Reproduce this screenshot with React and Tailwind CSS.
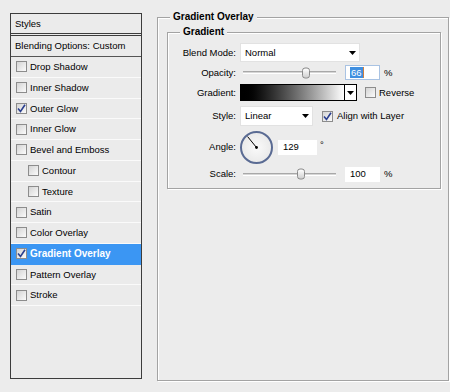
import React from "react";

function Check({ checked }) {
  return (
    <div className="w-[11px] h-[11px] shrink-0 border border-[#8c8c8c] bg-gradient-to-br from-[#d4d4d4] to-[#fbfbfb] flex items-center justify-center">
      {checked && (
        <svg width="9" height="9" viewBox="0 0 9 9">
          <path d="M1 4.5 L3.5 7.5 L8 0.8" stroke="#2a3f8f" strokeWidth="1.6" fill="none" />
        </svg>
      )}
    </div>
  );
}

function Arrow() {
  return (
    <svg width="7" height="4" viewBox="0 0 7 4">
      <path d="M0 0h7L3.5 4z" fill="#000" />
    </svg>
  );
}

function Slider({ pos }) {
  return (
    <div className="relative w-[96px] h-full flex items-center">
      <div className="ml-[3px] w-[93px] h-[3px] border-t border-[#a8a8a8] border-b border-b-white bg-[#d6d6d6]" />
      <div
        className="absolute top-1/2 -translate-y-1/2 w-[8px] h-[11px] rounded-[3px] border border-[#8a8a8a] bg-gradient-to-b from-white to-[#d0d0d0]"
        style={{ left: pos }}
      />
    </div>
  );
}

const items = [
  ["Drop Shadow", false, 0],
  ["Inner Shadow", false, 0],
  ["Outer Glow", true, 0],
  ["Inner Glow", false, 0],
  ["Bevel and Emboss", false, 0],
  ["Contour", false, 1],
  ["Texture", false, 1],
  ["Satin", false, 0],
  ["Color Overlay", false, 0],
  ["Gradient Overlay", true, 0, true],
  ["Pattern Overlay", false, 0],
  ["Stroke", false, 0],
];

export default function App() {
  return (
    <div className="w-[450px] h-[392px] bg-[#ececec] flex items-start font-['Liberation_Sans',Arial,sans-serif] text-[9.5px] leading-none text-black whitespace-nowrap">
      {/* Left styles list */}
      <div className="ml-[10px] mt-[13px] w-[132px] h-[366px] border border-[#3c3c3c] flex flex-col bg-[#ebebeb]">
        <div className="h-[22px] border-b-[3px] border-double border-[#3c3c3c] flex items-center pl-[4px]">Styles</div>
        <div className="h-[21px] border-b border-[#555] flex items-center pl-[4px]">Blending Options: Custom</div>
        {items.map(([label, checked, indent, active]) => (
          <div
            key={label}
            className={
              "h-[20.75px] border-b flex items-center " +
              (active ? "bg-[#3b96f3] border-[#3b96f3] text-white font-bold text-[10px]" : "border-[#fafafa]") +
              (indent ? " pl-[17px]" : " pl-[5px]")
            }
          >
            <Check checked={checked} />
            <span className="ml-[3px]">{label}</span>
          </div>
        ))}
      </div>

      {/* Right panel */}
      <div className="relative ml-[15px] mt-[17px] w-[292px] h-[364px] border border-[#a3a3a3] shadow-[inset_1px_1px_0_#fff,1px_1px_0_#fff]">
        <span className="absolute -top-[6px] left-[12px] px-[3px] bg-[#ececec] font-bold text-[10px]">Gradient Overlay</span>
        <div className="relative ml-[9px] mt-[14px] w-[274px] h-[157px] border border-[#a3a3a3] shadow-[inset_1px_1px_0_#fff,1px_1px_0_#fff] pt-[10px]">
          <span className="absolute -top-[6px] left-[12px] px-[3px] bg-[#ececec] font-bold text-[10px]">Gradient</span>

          {/* Blend Mode */}
          <div className="h-[19px] flex items-center">
            <div className="w-[68px] text-right">Blend Mode:</div>
            <div className="ml-[4px] w-[120px] h-[19px] bg-white border border-[#e2e2e2] flex items-center justify-between pl-[4px] pr-[3px]">
              <span>Normal</span>
              <Arrow />
            </div>
          </div>

          {/* Opacity */}
          <div className="h-[21px] flex items-center">
            <div className="w-[68px] text-right">Opacity:</div>
            <div className="ml-[4px] h-full flex items-center">
              <Slider pos={62} />
              <div className="ml-[9px] w-[35px] h-[15px] bg-white border border-[#a9c3e3] flex items-center pl-[4px]">
                <span className="bg-[#3f8fe0] text-white px-[1px] py-[1px]">66</span>
                <span className="w-px h-[11px] bg-[#d08040]" />
              </div>
              <span className="ml-[4px]">%</span>
            </div>
          </div>

          {/* Gradient */}
          <div className="h-[19px] flex items-center">
            <div className="w-[68px] text-right">Gradient:</div>
            <div className="ml-[4px] flex items-center">
              <div className="w-[105px] h-[17px] border border-black bg-gradient-to-r from-black to-white" />
              <div className="w-[12px] h-[17px] bg-white border border-black border-l-0 flex items-center justify-center">
                <Arrow />
              </div>
              <div className="ml-[8px]"><Check checked={false} /></div>
              <span className="ml-[3px]">Reverse</span>
            </div>
          </div>

          {/* Style */}
          <div className="mt-[4px] h-[20px] flex items-center">
            <div className="w-[68px] text-right">Style:</div>
            <div className="ml-[4px] w-[73px] h-[20px] bg-white border border-[#e2e2e2] flex items-center justify-between pl-[4px] pr-[3px]">
              <span>Linear</span>
              <Arrow />
            </div>
            <div className="ml-[9px]"><Check checked={true} /></div>
            <span className="ml-[4px]">Align with Layer</span>
          </div>

          {/* Angle */}
          <div className="mt-[4px] h-[34px] flex items-center">
            <div className="w-[68px] text-right">Angle:</div>
            <div className="ml-[4px] w-[33px] h-[33px] rounded-full border-2 border-[#5a6b93] bg-[radial-gradient(circle,#fafafa,#e4e4e4)]">
              <svg width="29" height="29" viewBox="0 0 29 29">
                <line x1="14.5" y1="14.5" x2="5.6" y2="3.6" stroke="#000" strokeWidth="1" />
                <circle cx="14.5" cy="14.5" r="1.4" fill="#000" />
              </svg>
            </div>
            <div className="ml-[5px] w-[39px] h-[15px] bg-white flex items-center pl-[5px]">129</div>
            <span className="ml-[3px] -mt-[5px]">°</span>
          </div>

          {/* Scale */}
          <div className="mt-[2px] h-[16px] flex items-center">
            <div className="w-[68px] text-right">Scale:</div>
            <div className="ml-[4px] h-full flex items-center">
              <Slider pos={57} />
              <div className="ml-[9px] w-[35px] h-[15px] bg-white flex items-center pl-[5px]">100</div>
              <span className="ml-[4px]">%</span>
            </div>
          </div>
        </div>
      </div>
    </div>
  );
}
